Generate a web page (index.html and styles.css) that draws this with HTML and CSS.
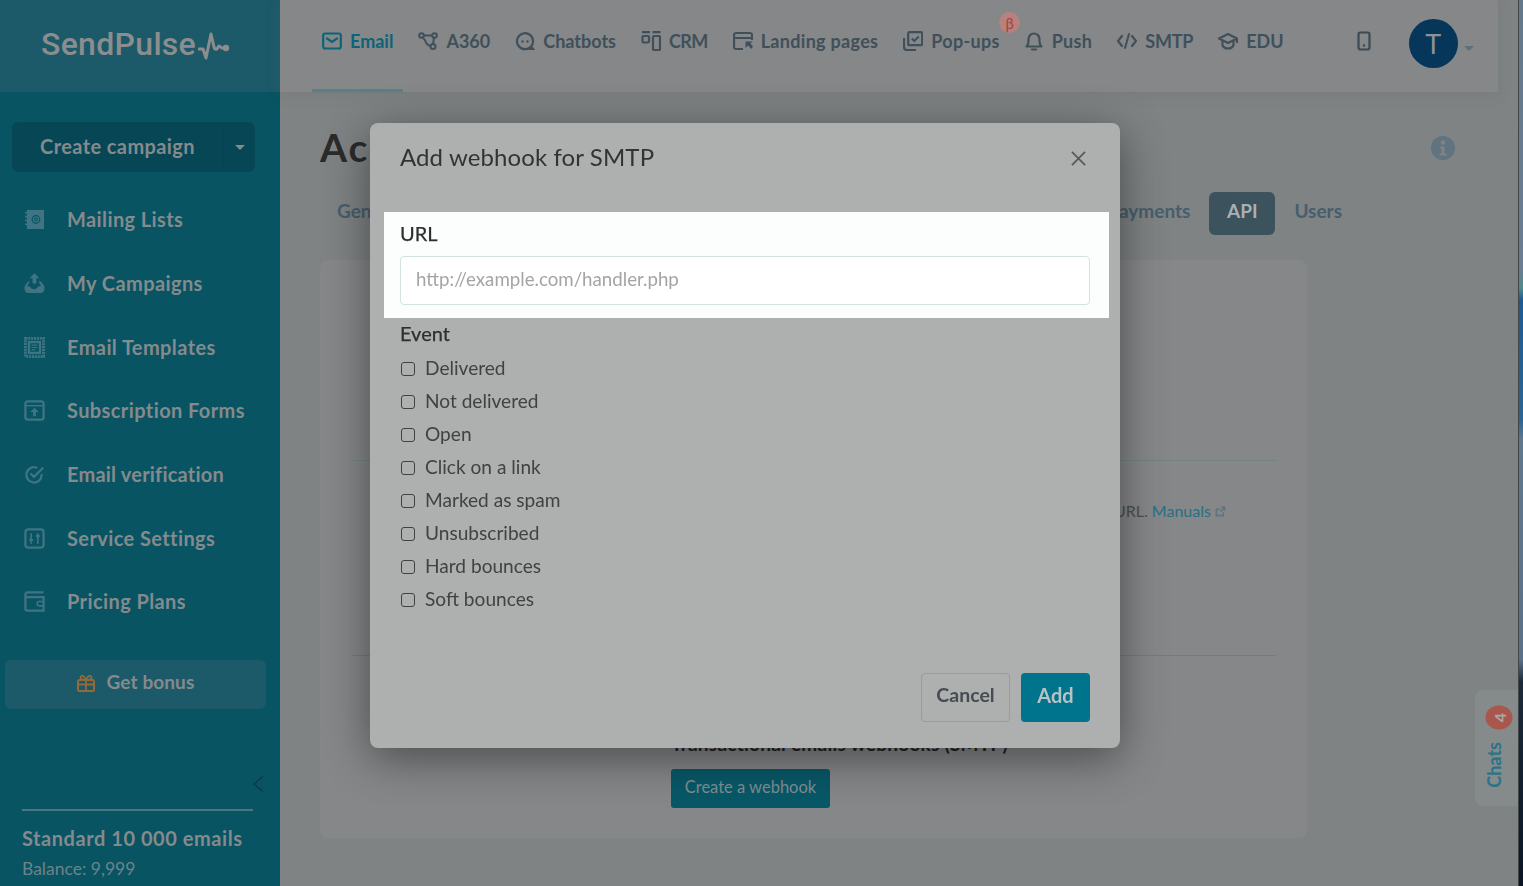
FILE: index.html
```html
<!DOCTYPE html>
<html lang="en">
<head>
<meta charset="utf-8">
<title>SendPulse - Add webhook for SMTP</title>
<link rel="stylesheet" href="styles.css">
</head>
<body>
<div class="app">
  <aside class="sidebar">
    <div class="logo">
      <span class="logo-text">SendPulse</span>
      <svg class="logo-pulse" viewBox="0 0 32 28"><path d="M1 17h4l3 9L13 2l3 13c1 3 3 3 4 0l1-1 3 2h5" fill="none" stroke="currentColor" stroke-width="3" stroke-linecap="round" stroke-linejoin="round"/><circle cx="28" cy="16" r="3.200" fill="currentColor"/></svg>
    </div>
    <div class="create">
      <span class="create-main">Create campaign</span>
      <span class="create-caret"><i class="caret"></i></span>
    </div>
    <nav class="side-nav">
      <a class="side-item"><svg class="side-icon" viewBox="0 0 22 22"><path d="M3 1h18v20H3z" fill="currentColor"/><path d="M1 4h3M1 8h3M1 12h3M1 16h3" stroke="currentColor" stroke-width="1.600"/><circle cx="12.500" cy="11" r="4" fill="none" stroke="#085463" stroke-width="1.200"/><circle cx="12.500" cy="11" r="1.500" fill="none" stroke="#085463" stroke-width="1.100"/></svg><span>Mailing Lists</span></a>
      <a class="side-item"><svg class="side-icon" viewBox="0 0 22 22"><path d="M11 0l5 5.500h-3V11H9V5.500H6z" fill="currentColor"/><path d="M6 8C4 9 3 10 2 12c-1 1-1.500 2-1.500 4 0 3 1.500 5 4 5h13c2.500 0 4-2 4-5 0-2-.5-3-1.500-4-1-2-2-3-4-4v3c1 1 1.500 2 2 3h-3c-1 2-2.500 3-4.500 3s-3.500-1-4.500-3h-3c.5-1 1-2 2-3z" fill="currentColor"/></svg><span>My Campaigns</span></a>
      <a class="side-item"><svg class="side-icon" viewBox="0 0 22 22"><path d="M1.500 1.500h19v19h-19z" fill="none" stroke="currentColor" stroke-width="3" stroke-dasharray="2.200 .8"/><path d="M4 4h14v14H4z" fill="currentColor"/><path d="M6.500 6.500h9v9h-9z" fill="#085463"/><path d="M8 8.500h6M8 11h6M8 13.500h4" stroke="currentColor" stroke-width="1.300"/></svg><span>Email Templates</span></a>
      <a class="side-item"><svg class="side-icon" viewBox="0 0 22 22"><rect x="1.500" y="1.500" width="19" height="19" rx="2.500" fill="none" stroke="currentColor" stroke-width="2.400"/><path d="M2 6h18" stroke="currentColor" stroke-width="1.500"/><path d="M11 8l4.500 4.500h-3V17h-3v-4.500h-3z" fill="currentColor"/></svg><span>Subscription Forms</span></a>
      <a class="side-item"><svg class="side-icon" viewBox="0 0 22 22"><path d="M18.500 11.500A8 8 0 1 1 13 3.800" fill="none" stroke="currentColor" stroke-width="2.400" stroke-linecap="round"/><path d="M7.500 10.500l3 3L19.500 4.500" fill="none" stroke="currentColor" stroke-width="2.400" stroke-linecap="round" stroke-linejoin="round"/></svg><span class="tight">Email verification</span></a>
      <a class="side-item"><svg class="side-icon" viewBox="0 0 22 22"><rect x="1.500" y="1.500" width="19" height="19" rx="3" fill="none" stroke="currentColor" stroke-width="2.400"/><path d="M7.500 5.500v11M14.500 5.500v11" stroke="currentColor" stroke-width="1.800"/><path d="M5.500 12.500h4M12.500 8.500h4" stroke="currentColor" stroke-width="2.200"/></svg><span>Service Settings</span></a>
      <a class="side-item"><svg class="side-icon" viewBox="0 0 22 22"><path d="M20.500 1.500H3.500a2 2 0 0 0-2 2v15a2 2 0 0 0 2 2h17v-14H2" fill="none" stroke="currentColor" stroke-width="2.400"/><path d="M20.500 11H16a2 2 0 0 0 0 4.500h4.500" fill="none" stroke="currentColor" stroke-width="1.800"/></svg><span>Pricing Plans</span></a>
    </nav>
    <a class="bonus">
      <svg class="bonus-icon" viewBox="0 0 18 18"><rect x="1" y="6" width="16" height="11" rx="1.500" fill="none" stroke="currentColor" stroke-width="2"/><path d="M9 6v11M1 10.500h16" stroke="currentColor" stroke-width="1.800"/><path d="M9 6C7 1 3.500 1 3.500 3.500 3.500 5 5 6 9 6zM9 6c2-5 5.500-5 5.500-2.500C14.500 5 13 6 9 6z" fill="none" stroke="currentColor" stroke-width="1.800"/></svg>
      <span class="bonus-text">Get bonus</span>
    </a>
    <div class="collapse"><svg viewBox="0 0 12 16"><path d="M11 .5L2 8l9 7.500" fill="none" stroke="currentColor" stroke-width="1.500"/></svg></div>
    <div class="plan">
      <div class="plan-name">Standard 10 000 emails</div>
      <div class="plan-balance">Balance: 9,999</div>
    </div>
  </aside>

  <div class="main">
    <header class="topbar">
      <nav class="top-nav">
        <a class="top-item is-active"><svg class="top-icon" viewBox="0 0 20 20"><rect x="1.200" y="2.500" width="17.600" height="15" rx="2" fill="none" stroke="currentColor" stroke-width="2.200"/><path d="M5 7.500l5 3.500 5-3.500" fill="none" stroke="currentColor" stroke-width="2.200" stroke-linecap="round"/></svg><span>Email</span></a>
        <a class="top-item"><svg class="top-icon" viewBox="0 0 20 20"><circle cx="3.500" cy="4.500" r="2.300" fill="none" stroke="currentColor" stroke-width="2"/><circle cx="16.500" cy="4.500" r="2.300" fill="none" stroke="currentColor" stroke-width="2"/><circle cx="15" cy="15.500" r="2.500" fill="none" stroke="currentColor" stroke-width="2"/><path d="M6 4.500h8M5 7c1.500 1 2 2 2.500 3.500 1 2.500 2.500 4 5 4.500M16 7l-1 6" fill="none" stroke="currentColor" stroke-width="2"/></svg><span>A360</span></a>
        <a class="top-item"><svg class="top-icon" viewBox="0 0 20 20"><path d="M16 15.500A8 8 0 1 1 18 10.500c0 1.800-.6 3.500-2 5l2 2.500h-3" fill="none" stroke="currentColor" stroke-width="2.200" stroke-linecap="round"/><circle cx="7.500" cy="10.500" r="1.200" fill="currentColor"/><circle cx="12.500" cy="10.500" r="1.200" fill="currentColor"/></svg><span>Chatbots</span></a>
        <a class="top-item"><svg class="top-icon" viewBox="0 0 20 20"><path d="M1 1.200h8M11.500 1.200h8" stroke="currentColor" stroke-width="2.200"/><rect x="1.500" y="5" width="6.500" height="6.500" rx="1" fill="none" stroke="currentColor" stroke-width="2.200"/><rect x="12" y="5" width="7" height="14" rx="1" fill="none" stroke="currentColor" stroke-width="2.200"/></svg><span class="narrow">CRM</span></a>
        <a class="top-item"><svg class="top-icon" viewBox="0 0 20 20"><path d="M19 9V4a2 2 0 0 0-2-2H3a2 2 0 0 0-2 2v12a2 2 0 0 0 2 2h7M1 7h18" fill="none" stroke="currentColor" stroke-width="2.200"/><path d="M12.500 10.500h7l-2 2 2.500 3-1.800 2.500-3-3.500-2.700 2.500z" fill="currentColor"/></svg><span class="wide">Landing pages</span></a>
        <a class="top-item beta-host"><svg class="top-icon" viewBox="0 0 20 20"><rect x="5.200" y="1.200" width="14" height="13" rx="1.500" fill="none" stroke="currentColor" stroke-width="2.200"/><path d="M1 7v9a3 3 0 0 0 3 3h9" fill="none" stroke="currentColor" stroke-width="2.200"/><path d="M8.800 7.500l2.500 2.500 4.500-4.500" fill="none" stroke="currentColor" stroke-width="2"/></svg><span class="wide">Pop-ups</span><b class="beta">β</b></a>
        <a class="top-item"><svg class="top-icon" viewBox="0 0 20 20"><path d="M2.500 15.500c1.500-1.500 2-3 2-5.500V8a5.500 5.500 0 0 1 11 0v2c0 2.500.5 4 2 5.500z" fill="none" stroke="currentColor" stroke-width="2.200" stroke-linejoin="round"/><path d="M8 18.500h4" stroke="currentColor" stroke-width="2.200" stroke-linecap="round"/></svg><span class="wide">Push</span></a>
        <a class="top-item"><svg class="top-icon" viewBox="0 0 20 20"><path d="M5 5l-4 5 4 5M15 5l4 5-4 5" fill="none" stroke="currentColor" stroke-width="2.200" stroke-linecap="round"/><path d="M12 3L8 17" stroke="currentColor" stroke-width="2" stroke-linecap="round"/></svg><span class="narrow-s">SMTP</span></a>
        <a class="top-item"><svg class="top-icon" viewBox="0 0 20 20"><path d="M10 3l9 4.500-9 4.500-9-4.500z" fill="none" stroke="currentColor" stroke-width="2.200" stroke-linejoin="round"/><path d="M4.500 10v4.500c1 2 3.200 3 5.500 3s4.500-1 5.500-3V10M19 7.500V12" fill="none" stroke="currentColor" stroke-width="2.200"/></svg><span>EDU</span></a>
      </nav>
      <svg class="phone" viewBox="0 0 14 20"><rect x="1.500" y="1.500" width="11" height="17" rx="2" fill="none" stroke="currentColor" stroke-width="2.200"/><circle cx="7" cy="14.500" r="1.200" fill="currentColor"/></svg>
      <div class="avatar">T</div>
      <i class="caret caret-user"></i>
    </header>

    <div class="content">
      <div class="title-row">
        <h1 class="page-title">Account settings</h1>
        <svg class="info" viewBox="0 0 24 24"><circle cx="12" cy="12" r="12" fill="currentColor"/><circle cx="12" cy="6.500" r="2.200" fill="#7f8383"/><path d="M9 10.500h4.500v7H15.500v2h-7v-2h2v-5H9z" fill="#7f8383"/></svg>
      </div>
      <div class="tabs">
        <a class="tab tab-first">General</a>
        <a class="tab">Payments</a>
        <a class="tab is-selected">API</a>
        <a class="tab">Users</a>
      </div>
      <section class="card">
        <div class="card-block block-one"></div>
        <div class="card-block block-two">
          <div></div>
          <p class="note">Specify the URL. <a class="link">Manuals</a> <svg class="ext" viewBox="0 0 12 12"><path d="M9 7v3.500H1.500v-7H5M6 6l4.500-4.500M7 1.500h3.500V5" fill="none" stroke="currentColor" stroke-width="1.800"/></svg></p>
        </div>
        <div class="card-block block-three">
          <div></div>
          <div>
            <h3 class="webhook-title">Transactional emails webhooks (SMTP)</h3>
            <a class="create-hook">Create a webhook</a>
          </div>
        </div>
      </section>
    </div>
  </div>
  <div class="desktop-edge"></div>
</div>

<div class="chats">
  <span class="chats-label">Chats</span>
  <span class="chats-badge">4</span>
</div>

<div class="modal" role="dialog">
  <div class="modal-head">
    <h2 class="modal-title">Add webhook for SMTP</h2>
    <svg class="modal-close" viewBox="0 0 16 16"><path d="M1 1l14 14M15 1L1 15" stroke="currentColor" stroke-width="1.800"/></svg>
  </div>
  <div class="spotlight">
    <label class="field-label">URL</label>
    <input class="url-input" type="text" placeholder="http://example.com/handler.php">
  </div>
  <div class="events">
    <div class="field-label">Event</div>
    <label class="check"><input type="checkbox"><span>Delivered</span></label>
    <label class="check"><input type="checkbox"><span>Not delivered</span></label>
    <label class="check"><input type="checkbox"><span>Open</span></label>
    <label class="check"><input type="checkbox"><span>Click on a link</span></label>
    <label class="check"><input type="checkbox"><span>Marked as spam</span></label>
    <label class="check"><input type="checkbox"><span>Unsubscribed</span></label>
    <label class="check"><input type="checkbox"><span>Hard bounces</span></label>
    <label class="check"><input type="checkbox"><span>Soft bounces</span></label>
  </div>
  <div class="modal-foot">
    <button class="btn btn-cancel">Cancel</button>
    <button class="btn btn-add">Add</button>
  </div>
</div>
</body>
</html>
```
FILE: styles.css
```css
* { box-sizing: border-box; }
html, body { margin: 0; height: 100%; overflow: hidden; }
body { font-family: "Lato", "Noto Sans", sans-serif; background: #7f8383; color: #2c2e30; }
a { text-decoration: none; }
h1, h2, h3, p { margin: 0; }

.app { display: grid; grid-template-columns: 280px 1fr 5px; height: 886px; }

/* sidebar */
.sidebar { background: #085463; color: #858a8d; display: flex; flex-direction: column; height: 886px; }
.logo { height: 92px; background: #1c5a69; display: flex; align-items: center; padding: 0 0 5px 41px; color: #8b8d8e; }
.logo-text { font-family: "Roboto", sans-serif; font-weight: 500; font-size: 32px; letter-spacing: .3px; }
.logo-pulse { width: 32px; height: 28px; margin: 4px 0 0 2px; }
.create { margin: 30px 25px 0 12px; height: 50px; display: flex; background: #074755; border-radius: 6px; font-weight: 700; font-size: 20px; letter-spacing: .4px; }
.create-main { width: 211px; display: flex; align-items: center; justify-content: center; padding-bottom: 3px; }
.create-caret { flex: 1; display: flex; align-items: center; justify-content: center; border-left: 1px solid #08434f; }
.caret { display: block; width: 0; height: 0; border-left: 5px solid transparent; border-right: 5px solid transparent; border-top: 5px solid #858a8d; }
.side-nav { display: flex; flex-direction: column; margin-top: 16px; }
.side-item { height: 63.670px; display: flex; align-items: center; padding-left: 24px; gap: 22px; font-weight: 700; font-size: 20px; letter-spacing: .4px; color: #858a8d; }
.side-item span { padding-bottom: 1px; }
.side-item .tight { letter-spacing: .2px; }
.side-icon { width: 21px; height: 21px; color: #3f7483; flex: none; }
.bonus { margin: 26px 14px 0 5px; height: 49px; background: #1c5a69; border-radius: 6px; display: flex; align-items: center; justify-content: center; gap: 12px; font-weight: 700; font-size: 19px; letter-spacing: .1px; color: #858a8d; }
.bonus-text { padding-bottom: 6px; }
.bonus-icon { width: 18px; height: 18px; color: #946a38; margin-bottom: 3px; }
.collapse { margin: 67px 16px 0 0; align-self: flex-end; color: #0d3a50; line-height: 0; }
.collapse svg { width: 12px; height: 16px; }
.plan { margin: 17px 27px 0 22px; border-top: 2px solid #4b7580; padding-top: 15px; }
.plan-name { font-weight: 700; font-size: 20px; letter-spacing: .55px; }
.plan-balance { font-size: 17.500px; margin-top: 8px; color: #6e8289; }

/* main */
.main { min-width: 0; display: flex; flex-direction: column; }
.topbar { height: 92px; margin-right: 20px; background: #858789; display: flex; align-items: flex-start; box-shadow: 0 2px 12px rgba(90,100,100,.25); }
.top-nav { display: flex; gap: 5px; margin-left: 32px; height: 92px; }
.top-item { position: relative; display: flex; align-items: center; gap: 8px; padding: 0 10px 8px; height: 92px; font-weight: 700; font-size: 18px; color: #40505a; border-bottom: 3px solid transparent; white-space: nowrap; }
.top-item.is-active { color: #0d6478; border-bottom-color: #5b7f88; }
.top-icon { width: 20px; height: 20px; flex: none; }
.narrow { letter-spacing: -.6px; }
.narrow-s { letter-spacing: -.2px; }
.wide { letter-spacing: .3px; }
.beta-host { margin-right: -1px; }
.beta { position: absolute; left: 106px; top: 12px; width: 21px; height: 21px; border-radius: 50%; background: #b7817f; color: #a8423a; font-size: 15px; font-weight: 400; display: flex; align-items: center; justify-content: center; }
.phone { width: 14px; height: 20px; color: #3c4a52; margin: 31px 0 0 63px; }
.avatar { width: 49px; height: 49px; margin: 19px 0 0 38px; border-radius: 50%; background: #07365b; color: #8c9296; font-size: 27px; display: flex; align-items: center; justify-content: center; }
.caret-user { margin: 46px 0 0 6px; border-top-color: #5b6f7c; }

.content { padding-left: 40px; width: 1027px; }
.title-row { height: 100px; display: flex; align-items: center; justify-content: space-between; padding-top: 12px; margin-right: -148px; }
.page-title { font-size: 39px; font-weight: 700; letter-spacing: 2px; color: #2b2b2c; white-space: nowrap; margin-bottom: 2px; }
.info { width: 24px; height: 24px; color: #5f7480; }
.tabs { display: flex; align-items: center; height: 43px; gap: 19px; padding-left: 17px; margin-right: -35px; font-size: 19px; font-weight: 700; color: #475e6c; }
.tab { display: block; padding-bottom: 6px; }
.tab-first { margin-right: auto; }
.is-selected { width: 66px; height: 43px; background: #3c525d; color: #a9b0b3; border-radius: 6px; display: flex; align-items: center; justify-content: center; }
.card { margin-top: 25px; height: 578px; width: 987px; background: #858789; border-radius: 8px; padding: 0 31px; display: flex; flex-direction: column; }
.card-block { display: grid; grid-template-columns: 320px 1fr; }
.block-one { height: 201px; border-bottom: 1px solid #748285; }
.block-two { height: 195px; border-bottom: 1px solid #767a80; padding-top: 40px; }
.note { font-size: 16px; color: #4c4f50; text-align: right; padding-right: 50px; }
.link { color: #2a6f84; }
.ext { width: 11px; height: 11px; color: #5f7480; }
.block-three { padding-top: 77px; }
.webhook-title { font-size: 19px; font-weight: 700; color: #222; line-height: 22px; letter-spacing: .25px; }
.create-hook { display: flex; align-items: center; justify-content: center; margin-top: 14px; width: 159px; height: 39px; padding-bottom: 3px; border-radius: 3px; background: #085868; color: #7f8e90; font-size: 16.500px; }

.desktop-edge { background: linear-gradient(#64788c 0, #6a7d92 270px, #4f8a8c 288px, #1e5a94 300px, #2b6594 420px, #60788e 440px, #5a7088 660px, #1c2a3a 682px, #0a1424 100%); border-left: 1px solid #3f464c; }

/* chats */
.chats { position: fixed; left: 1475px; top: 690px; width: 43px; height: 116px; background: #858a8a; border-radius: 8px 0 0 8px; }
.chats-label { position: absolute; left: 8px; bottom: 18px; writing-mode: vertical-rl; transform: rotate(180deg); font-size: 18px; font-weight: 700; color: #2a7488; }
.chats-badge { position: absolute; left: 12px; top: 14px; width: 24px; height: 27px; border-radius: 50%; background: #a9564c; color: #a8a8a8; font-size: 16px; font-weight: 700; display: flex; align-items: center; justify-content: center; transform: rotate(-90deg); }

/* modal */
.modal { position: fixed; left: 370px; top: 123px; width: 750px; height: 625px; background: #aeb0af; border-radius: 8px; box-shadow: 0 10px 45px rgba(0,0,0,.45); padding: 0 30px; display: flex; flex-direction: column; }
.modal-head { height: 89px; display: flex; justify-content: space-between; align-items: flex-start; padding-top: 20px; }
.modal-title { font-size: 24px; line-height: 30px; font-weight: 400; color: #333; letter-spacing: .1px; margin-top: -1px; }
.modal-close { width: 15px; height: 15px; color: #55585a; margin: 8px 4px 0 0; }
.spotlight { margin: 0 -19px 0 -16px; padding: 9px 19px 13px 16px; height: 106px; background: #fcfefd; }
.field-label { display: block; font-size: 20px; line-height: 24px; font-weight: 400; color: #2c2e30; -webkit-text-stroke: .25px #2c2e30; }
.url-input { display: block; width: 100%; height: 49px; margin-top: 11px; padding: 0 15px 3px; background: #fff; border: 1px solid #d3e3df; border-radius: 4px; font: 400 18.700px "Lato", sans-serif; color: #333; outline: none; }
.url-input::placeholder { color: #a3a5a5; opacity: 1; }
.events { margin-top: 3px; }
.events .field-label { margin-bottom: 6px; }
.check { display: flex; align-items: center; gap: 10.500px; height: 33px; font-size: 19.100px; color: #404243; }
.check input { appearance: none; -webkit-appearance: none; width: 14px; height: 14px; margin: 3px 0 0 .5px; border: 1.400px solid #3f4244; border-radius: 3px; background: transparent; flex: none; }
.modal-foot { margin-top: auto; padding-bottom: 26px; display: flex; justify-content: flex-end; gap: 11px; }
.btn { height: 49px; border-radius: 4px; font: 700 19.500px "Lato", sans-serif; padding: 0 0 6px; }
.btn-cancel { width: 89px; background: transparent; border: 1px solid #9a9c9c; color: #454c52; }
.btn-add { width: 69px; background: #00748c; border: 0; color: #b7c2c4; font-size: 20px; }
```
